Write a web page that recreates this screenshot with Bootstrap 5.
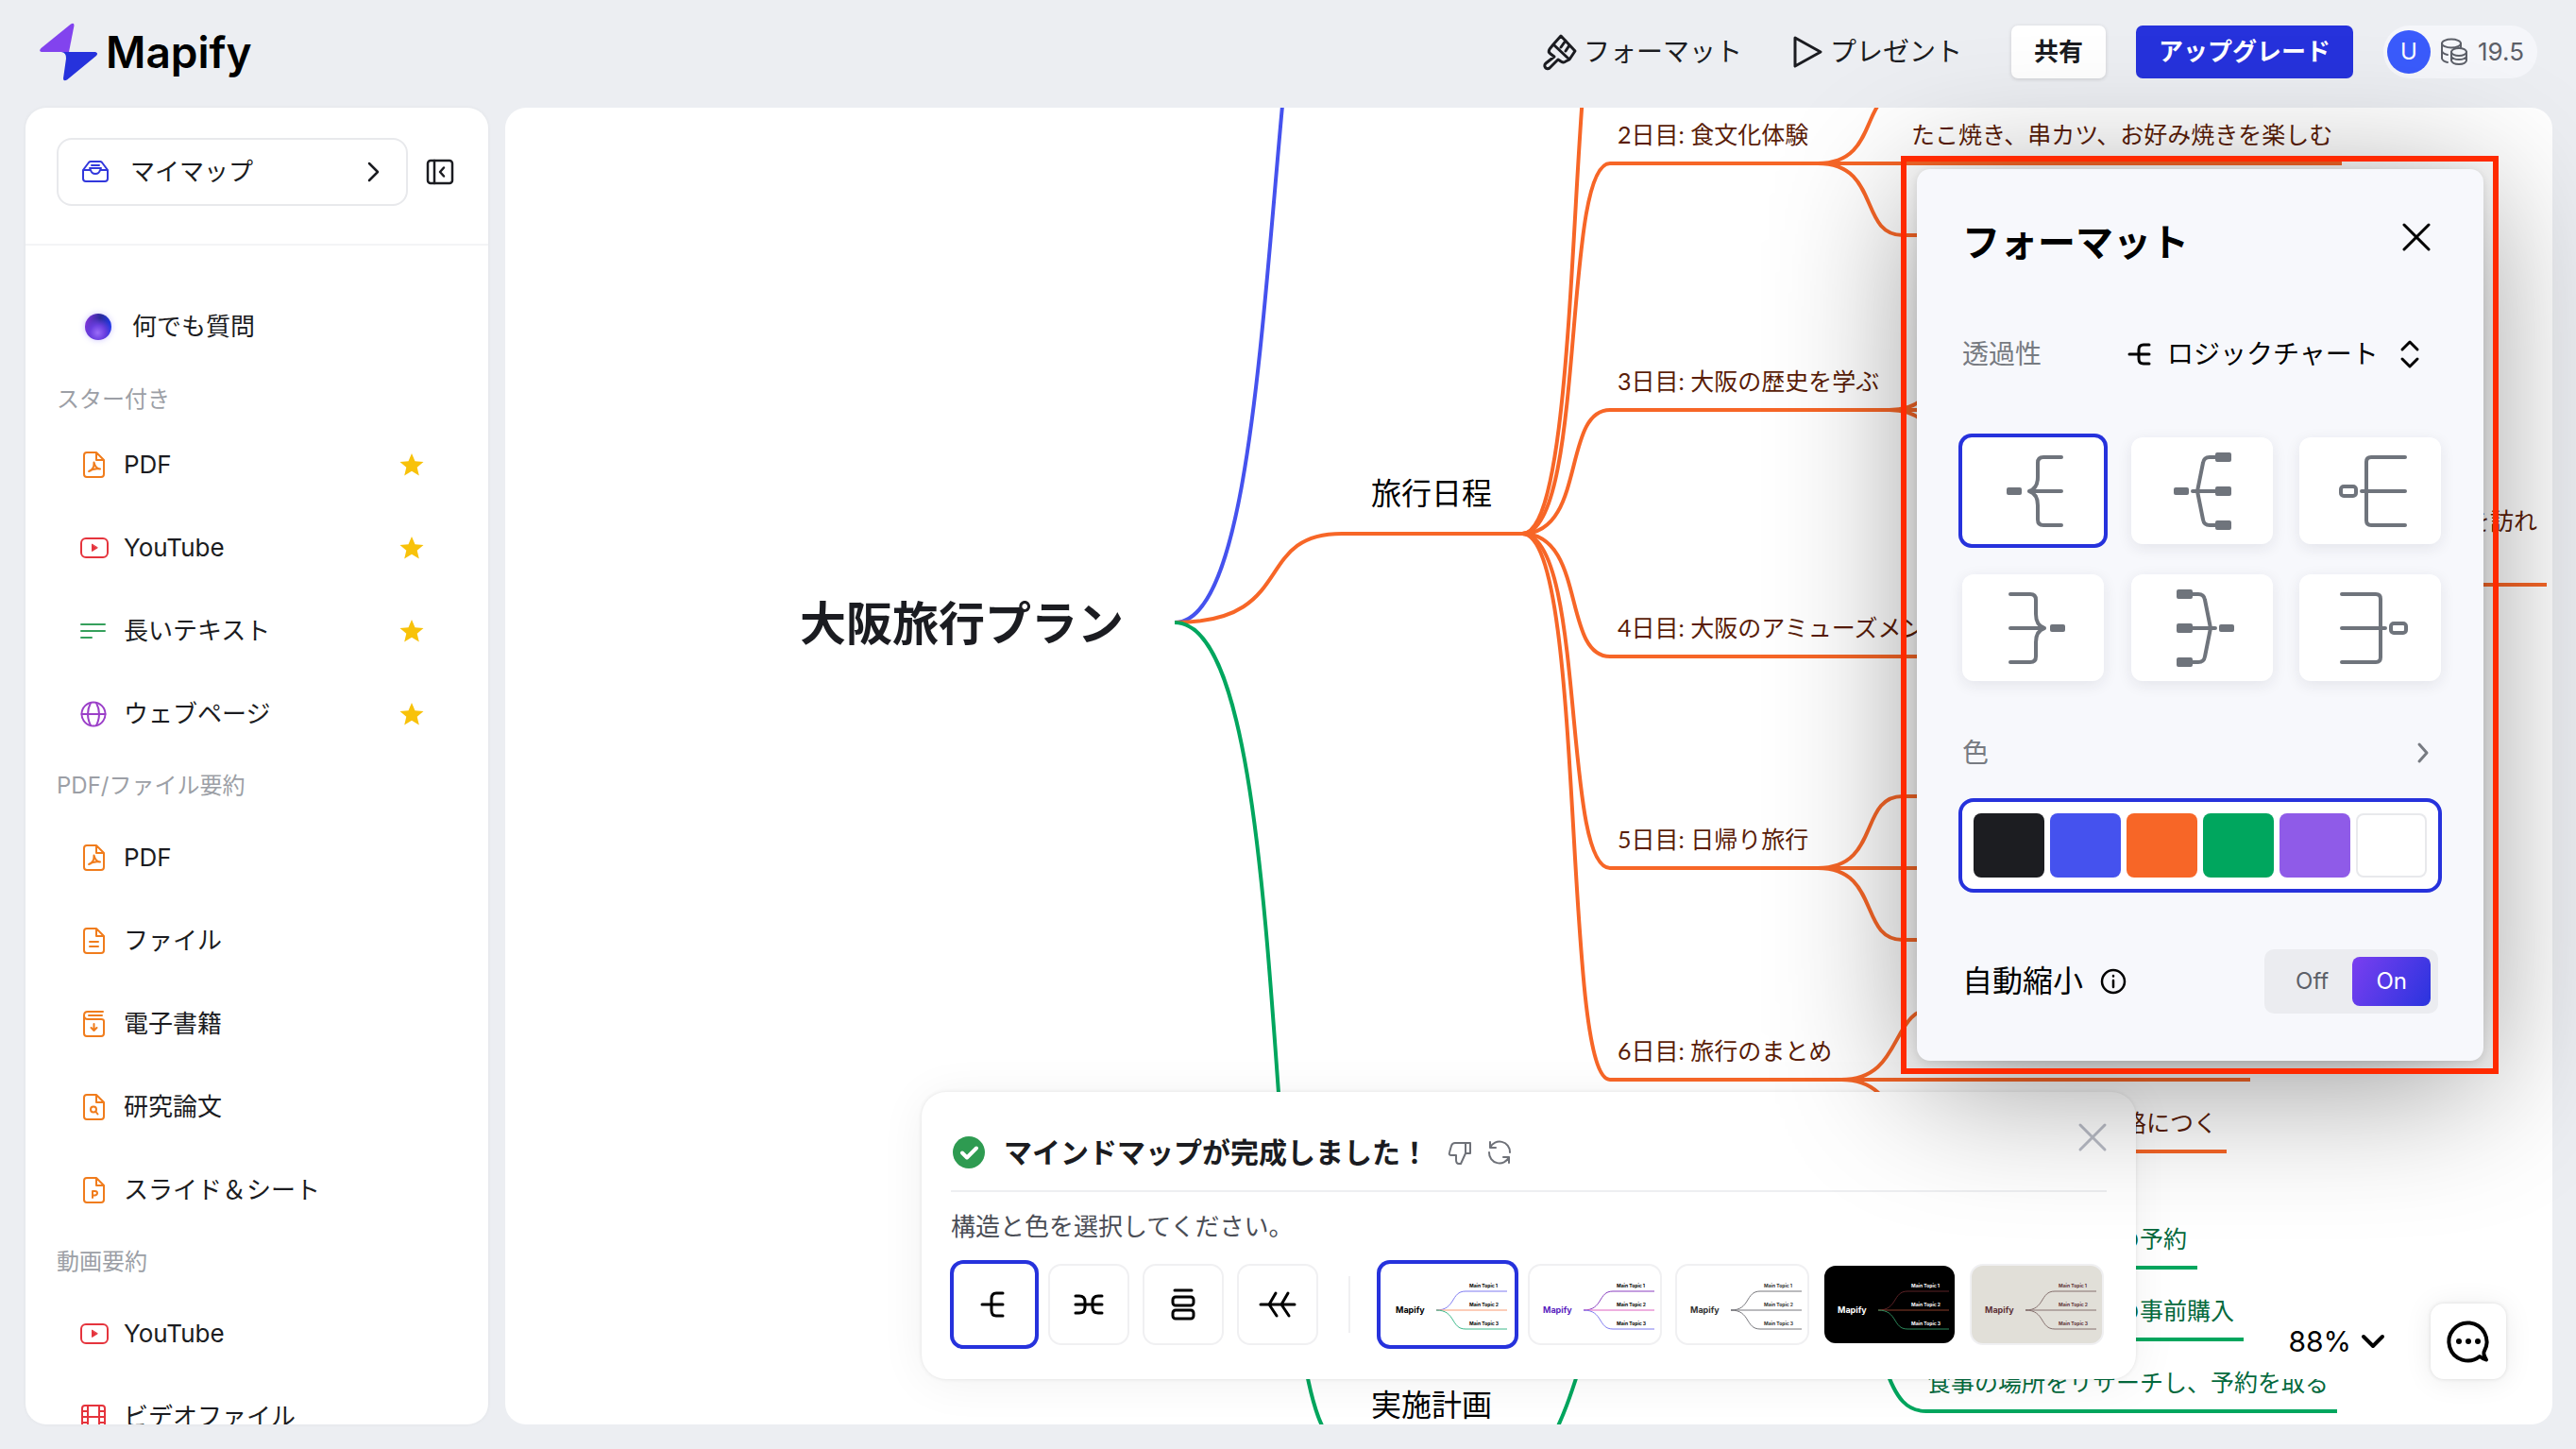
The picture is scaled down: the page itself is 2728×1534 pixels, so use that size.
<!DOCTYPE html>
<html lang="ja">
<head>
<meta charset="utf-8">
<meta name="viewport" content="width=device-width, initial-scale=1">
<title>Mapify</title>
<link href="https://cdn.jsdelivr.net/npm/bootstrap@5.3.0/dist/css/bootstrap.min.css" rel="stylesheet">
<style>
  :root { --brand: #2632dc; --ink: #1b1c21; --orange: #f76627; --green: #00a65e; }
  body { font-family: Inter, "Noto Sans CJK JP", sans-serif; background: #eceef2; color: var(--ink); font-size: 26px; line-height: 40px; }
  button, select { font-family: inherit; color: inherit; }
  svg { display: block; flex: none; overflow: visible; }
  .ico { fill: none; stroke: currentColor; stroke-width: 2; stroke-linecap: round; stroke-linejoin: round; }
  .plain { background: none; border: 0; padding: 0; }

  .topbar { height: 114px; padding: 0 41px 4px 42px; }
  .brand-name { font-size: 46px; font-weight: 600; color: #000; line-height: 56px; }
  .tool { font-size: 28px; gap: 7px; margin-right: 52px; }
  .btn-top { height: 56px; font-size: 26px; font-weight: 700; line-height: 40px; border-radius: 7px; padding: 0 24px; border: 0; }
  .btn-share { background: #fff; box-shadow: 0 1px 4px rgba(0,0,0,.14); margin-right: 32px; }
  .btn-up { background: var(--brand); color: #fff; margin-right: 32px; }
  .credit { height: 56px; border-radius: 28px; background: #f5f6fa; padding: 0 14px 0 4px; gap: 10px; color: #5c5f68; }
  .avatar { width: 46px; height: 46px; border-radius: 50%; background: #3a5bfc; color: #fff; font-size: 24px; }

  .workspace { padding: 0 25px 26px 27px; gap: 18px; min-height: 0; }
  .side { width: 490px; background: #fff; border-radius: 22px; box-shadow: 0 0 4px rgba(0,0,0,.05); }
  .side-head { padding: 32px 0 40px 33px; gap: 19px; border-bottom: 2px solid #f3f4f6; }
  .mymap { width: 372px; height: 72px; border: 2px solid #e8e9ec; border-radius: 16px; padding: 0 28px 0 24px; gap: 22px; }
  .side-row { height: 88px; padding: 0 68px 0 58px; color: var(--ink); text-decoration: none; }
  .side-row .pic { width: 28px; margin-right: 18px; }
  .side-ask { margin-top: 42px; padding-left: 63px; }
  .side-ask .pic { margin-right: 22px; }
  .side-label { font-size: 24px; height: 64px; padding-left: 33px; color: #9c9fa6; font-weight: 400; margin: 0; }
  .side-label.tight { height: 58px; padding-top: 8px; }
  .orb { width: 28px; height: 28px; border-radius: 50%; background: radial-gradient(circle at 48% 72%, #9a6cf8 0, #6b3fe0 32%, transparent 62%), linear-gradient(100deg, #7a34d6 10%, #2a2a9a 52%, #2238e8 90%); box-shadow: 0 0 6px rgba(110,90,250,.35); }

  .board { background: #fff; border-radius: 22px; }
  .board-map { border-radius: 22px; }
  .board-map svg { width: 100%; height: 100%; }
  .wire path { fill: none; stroke-width: 4; }
  .t1 { font-size: 49px; font-weight: 700; fill: #1b1c21; }
  .t2 { font-size: 32px; fill: #000; }
  .t3 { font-family: Lato, "Noto Sans CJK JP", sans-serif; font-size: 25px; fill: #5a1d08; }
  .t3.leafy { fill: #04693d; }

  .done { width: 1286px; bottom: 48px; background: #fff; border-radius: 26px; padding: 44px 31px 36px; box-shadow: 0 0 4px rgba(0,0,0,.1), 0 4px 50px rgba(0,0,0,.06); }
  .done h2 { font-size: 30px; line-height: 40px; font-weight: 700; margin: 0; }
  .done-head { padding: 0 2px 20px; border-bottom: 2px solid #eeeff1; gap: 20px; }
  .done-close { top: 32px; right: 30px; color: #b9bcc6; }
  .done-msg { color: #4b4e56; margin: 17px 0 19px; line-height: 40px; }
  .choices { gap: 14px; padding-left: 3px; }
  .choice { height: 86px; width: 86px; border: 2px solid #f0f0f2; border-radius: 14px; background: #fff; color: #000; overflow: hidden; }
  .choice.on { border: 0; box-shadow: 0 0 0 4px var(--brand); border-radius: 10px; }
  .choice.wide { width: 142px; }
  .choice.dark { background: #000; border-color: #fff; }
  .choice.sand { background: #e1dfd8; }
  .split { width: 2px; height: 60px; background: #f0f0f2; margin: 0 18px; }
  .mini { font-weight: 700; font-size: 9px; }
  .mini .s { font-size: 5px; }
  .mini path { fill: none; stroke-width: 1; }

  .corner { right: 49px; bottom: 48px; gap: 34px; color: #000; }
  .zoom { font-size: 30px; gap: 10px; background: #fff; height: 80px; padding: 0 14px; }
  .chat { width: 80px; height: 80px; border-radius: 14px; background: #fff; box-shadow: 0 0 4px rgba(0,0,0,.12), 0 2px 30px rgba(0,0,0,.08); }

  .format { top: 65px; right: 73px; width: 600px; background: #f7f8fc; border-radius: 14px; padding: 48px 45px 50px 48px; box-shadow: 0 2px 8px rgba(0,0,0,.1), 0 24px 150px rgba(0,0,0,.42); color: #000; z-index: 5; }
  .format h1 { font-size: 40px; line-height: 60px; font-weight: 700; margin: 0; }
  .format-head { padding-right: 10px; }
  .format-head .plain { margin-top: 8px; }
  .lbl { font-size: 28px; color: #777b82; }
  .kind { font-size: 28px; height: 48px; appearance: none; background: none; border: 0; width: 246px; padding: 0; color: #000; }
  .kind-end { margin-right: 22px; }
  .shapes { display: grid; grid-template-columns: repeat(3, 150px); justify-content: space-between; row-gap: 32px; }
  .shape { height: 113px; border: 0; background: #fff; border-radius: 12px; box-shadow: 0 4px 16px rgba(30,34,60,.09); color: #6f747c; }
  .shape.on { box-shadow: 0 0 0 4px var(--brand); border-radius: 10px; }
  .shape svg, .choice > svg.ico { margin: 0 auto; }
  .shape .ico { stroke-width: 4; }
  .swatches { margin: 4px -1px 0 -4px; border: 4px solid var(--brand); border-radius: 16px; padding: 12px; gap: 6px; background: #fff; }
  .swatch { height: 68px; border-radius: 8px; border: 0; }
  .auto-row { margin-top: 60px; }
  .auto { font-size: 32px; }
  .toggle { background: #ebecf0; border-radius: 10px; padding: 8px; width: 184px; font-size: 24px; margin-right: 3px; }
  .toggle button { height: 52px; border: 0; border-radius: 8px; background: none; color: #5c5f68; }
  .toggle .on { background: linear-gradient(120deg, #7a3ff0, #2a34de); color: #fff; }
  .frame { inset: -14px -16px -14px -17px; border: 6px solid #ff2a00; pointer-events: none; }
</style>
</head>
<body class="vh-100 overflow-hidden d-flex flex-column">

<header class="topbar d-flex align-items-center flex-shrink-0">
  <a href="#" class="d-flex align-items-center text-decoration-none gap-2">
    <svg width="62" height="62" viewBox="0 0 62 62"><path d="M33 1.500Q36.500-.5 36.500 3L31 31H2Q-1.500 30 1.500 27Z" fill="#8243ee"/><path d="M23 31H59Q62.500 32 60 35L29 60.500Q25 62.500 25 59L28 38Q28.500 32 23 31Z" fill="#2632dc"/></svg>
    <span class="brand-name">Mapify</span>
  </a>
  <nav class="d-flex align-items-center ms-auto">
    <button class="plain tool d-flex align-items-center">
      <svg class="ico" width="36" height="38" viewBox="0 0 36 38" style="stroke-width:3"><path d="M19 2 34 18 28 27 11 11ZM11 11 7 16Q5 19 8 21L12 24 3 31A3 3 0 0 0 7 36L16 27 19 29Q22 31 24 29L28 27M24 7 19 14M28 12 24 18"/></svg>
      フォーマット
    </button>
    <button class="plain tool d-flex align-items-center">
      <svg class="ico" width="34" height="36" viewBox="0 0 34 36" style="stroke-width:3"><path d="M4 3 31 18 4 33Z"/></svg>
      プレゼント
    </button>
    <button class="btn-top btn-share">共有</button>
    <button class="btn-top btn-up">アップグレード</button>
    <div class="credit d-flex align-items-center">
      <span class="avatar d-flex align-items-center justify-content-center">U</span>
      <svg class="ico" width="30" height="30" viewBox="0 0 30 30"><ellipse cx="12" cy="6" rx="10" ry="4.500"/><path d="M2 6V22Q3 25 8 26M2 14Q3 17 8 18M22 6V10"/><ellipse cx="20" cy="15" rx="8" ry="4"/><path d="M12 15V24Q13 28 20 28T28 24V15M12 20Q14 23 20 23T28 20"/></svg>
      <span>19.5</span>
    </div>
  </nav>
</header>

<main class="workspace d-flex flex-grow-1">
  <aside class="side flex-shrink-0 overflow-hidden">
    <div class="side-head d-flex align-items-center">
      <button class="mymap d-flex align-items-center bg-white">
        <svg class="ico" width="30" height="26" viewBox="0 0 30 26" style="color:#3238dc"><path d="M2 11 8 3Q9 2 10 2H20Q21 2 22 3L28 11V20Q28 23 25 23H5Q2 23 2 20ZM2 11H10Q11 15 15 15T20 11H28M11 6H19M9 9H21"/></svg>
        <span>マイマップ</span>
        <svg class="ico ms-auto" width="14" height="22" viewBox="0 0 14 22" style="stroke-width:2.500"><path d="M3 2 12 11 3 20"/></svg>
      </button>
      <button class="plain" aria-label="サイドバーを閉じる"><svg class="ico" width="30" height="28" viewBox="0 0 30 28" style="stroke-width:2.500"><rect x="2" y="2" width="26" height="24" rx="3"/><path d="M9 2V26M19 9.500 15 14 19 18.500"/></svg></button>
    </div>

    <a href="#" class="side-row side-ask d-flex align-items-center"><span class="pic orb"></span>何でも質問</a>

    <h2 class="side-label tight d-flex align-items-center">スター付き</h2>
    <a href="#" class="side-row d-flex align-items-center"><span class="pic"><svg class="ico" width="28" height="30" viewBox="0 0 28 30" style="color:#f07c1c"><path d="M17 2H7Q4 2 4 5V25Q4 28 7 28H22Q25 28 25 25V10ZM17 2V10H25M9 22Q15 20 14.500 12.500Q16 19 21 19.500Q14 18.500 9 22Z"/></svg></span>PDF<svg class="ms-auto" width="26" height="26" viewBox="0 0 26 26" fill="#f8c20a"><path d="M13 1 16.500 9.200 25.500 9.900 18.700 15.700 20.800 24.500 13 19.800 5.200 24.500 7.300 15.700.5 9.900 9.500 9.200Z"/></svg></a>
    <a href="#" class="side-row d-flex align-items-center"><span class="pic"><svg class="ico" width="30" height="24" viewBox="0 0 30 24" style="color:#e5343d"><rect x="1" y="2" width="28" height="20" rx="5"/><path d="M12.500 8.500V15.500L18 12Z" fill="currentColor" stroke-width="1"/></svg></span>YouTube<svg class="ms-auto" width="26" height="26" viewBox="0 0 26 26" fill="#f8c20a"><path d="M13 1 16.500 9.200 25.500 9.900 18.700 15.700 20.800 24.500 13 19.800 5.200 24.500 7.300 15.700.5 9.900 9.500 9.200Z"/></svg></a>
    <a href="#" class="side-row d-flex align-items-center"><span class="pic"><svg class="ico" width="28" height="20" viewBox="0 0 28 20" style="color:#36a05c"><path d="M1 3H26M1 10H26M1 17H12"/></svg></span>長いテキスト<svg class="ms-auto" width="26" height="26" viewBox="0 0 26 26" fill="#f8c20a"><path d="M13 1 16.500 9.200 25.500 9.900 18.700 15.700 20.800 24.500 13 19.800 5.200 24.500 7.300 15.700.5 9.900 9.500 9.200Z"/></svg></a>
    <a href="#" class="side-row d-flex align-items-center"><span class="pic"><svg class="ico" width="28" height="28" viewBox="0 0 28 28" style="color:#9b3fc8"><circle cx="14" cy="14" r="12.500"/><path d="M1.500 14H26.500M11 2Q5 14 11 26M17 2Q23 14 17 26"/></svg></span>ウェブページ<svg class="ms-auto" width="26" height="26" viewBox="0 0 26 26" fill="#f8c20a"><path d="M13 1 16.500 9.200 25.500 9.900 18.700 15.700 20.800 24.500 13 19.800 5.200 24.500 7.300 15.700.5 9.900 9.500 9.200Z"/></svg></a>

    <h2 class="side-label d-flex align-items-center">PDF/ファイル要約</h2>
    <a href="#" class="side-row d-flex align-items-center"><span class="pic"><svg class="ico" width="28" height="30" viewBox="0 0 28 30" style="color:#f07c1c"><path d="M17 2H7Q4 2 4 5V25Q4 28 7 28H22Q25 28 25 25V10ZM17 2V10H25M9 22Q15 20 14.500 12.500Q16 19 21 19.500Q14 18.500 9 22Z"/></svg></span>PDF</a>
    <a href="#" class="side-row d-flex align-items-center"><span class="pic"><svg class="ico" width="28" height="30" viewBox="0 0 28 30" style="color:#f07c1c"><path d="M17 2H7Q4 2 4 5V25Q4 28 7 28H22Q25 28 25 25V10ZM17 2V10H25M10 16H19M10 21H19"/></svg></span>ファイル</a>
    <a href="#" class="side-row d-flex align-items-center"><span class="pic"><svg class="ico" width="28" height="30" viewBox="0 0 28 30" style="color:#f07c1c"><path d="M24 2H8Q4 2 4 6V25Q4 28 7 28H22Q25 28 25 25V12Q25 10 22 10H8Q4 10 4 6M9 6H23M14.500 15V22M11.500 19 14.500 22 17.500 19"/></svg></span>電子書籍</a>
    <a href="#" class="side-row d-flex align-items-center"><span class="pic"><svg class="ico" width="28" height="30" viewBox="0 0 28 30" style="color:#f07c1c"><path d="M17 2H7Q4 2 4 5V25Q4 28 7 28H22Q25 28 25 25V10ZM17 2V10H25"/><circle cx="14" cy="17.500" r="3"/><path d="M16.500 20 18.500 22.500"/></svg></span>研究論文</a>
    <a href="#" class="side-row d-flex align-items-center"><span class="pic"><svg class="ico" width="28" height="30" viewBox="0 0 28 30" style="color:#f07c1c"><path d="M17 2H7Q4 2 4 5V25Q4 28 7 28H22Q25 28 25 25V10ZM17 2V10H25M13 23V16H15.500Q18 16 18 18T15.500 20.500H13"/></svg></span>スライド＆シート</a>

    <h2 class="side-label d-flex align-items-center">動画要約</h2>
    <a href="#" class="side-row d-flex align-items-center"><span class="pic"><svg class="ico" width="30" height="24" viewBox="0 0 30 24" style="color:#e5343d"><rect x="1" y="2" width="28" height="20" rx="5"/><path d="M12.500 8.500V15.500L18 12Z" fill="currentColor" stroke-width="1"/></svg></span>YouTube</a>
    <a href="#" class="side-row d-flex align-items-center"><span class="pic"><svg class="ico" width="28" height="28" viewBox="0 0 28 28" style="color:#e5343d"><rect x="2" y="2" width="24" height="24" rx="3"/><path d="M8 2V26M20 2V26M8 14H20M2 8H8M2 14H8M2 20H8M20 8H26M20 14H26M20 20H26"/></svg></span>ビデオファイル</a>
  </aside>

  <section class="board position-relative flex-grow-1">
    <div class="board-map overflow-hidden position-absolute top-0 start-0 w-100 h-100">
      <svg viewBox="535 114 2168 1394" preserveAspectRatio="xMidYMid slice">
        <g class="wire">
          <path stroke="#4552ee" d="M1244 659C1320 659 1335 361 1358 112"/>
          <g stroke="#f76627">
            <path d="M1244 659C1375 659 1325 565 1421 565H1614"/>
            <path d="M1612 565C1680 565 1658 -47 1705 -47"/>
            <path d="M1612 565C1680 565 1654 173 1705 173H2480"/>
            <path d="M1612 565C1680 565 1654 434 1705 434H2200"/>
            <path d="M1612 565C1680 565 1654 695 1705 695H2200"/>
            <path d="M1612 565C1680 565 1654 919 1705 919H2200"/>
            <path d="M1612 565C1680 565 1654 1143 1705 1143H2383"/>
            <path d="M1925 173C1992 173 1968 97 2015 97"/>
            <path d="M1925 173C1992 173 1968 249 2015 249H2100"/>
            <path d="M2001 434C2068 434 2044 358 2091 358"/>
            <path d="M2001 434C2068 434 2044 510 2091 510"/>
            <path d="M1925 919C1992 919 1968 843 2015 843H2100"/>
            <path d="M1925 919C1992 919 1968 995 2015 995H2100"/>
            <path d="M1950 1143C2017 1143 2000 1067 2050 1067"/>
            <path d="M1950 1143C2017 1143 2000 1219 2050 1219H2358"/>
            <path d="M2500 619H2697"/>
          </g>
          <g stroke="#00a65e">
            <path d="M1244 659C1380 659 1330 1530 1422 1530"/>
            <path d="M1640 1530C1656 1500 1664 1475 1672 1450"/>
            <path d="M1996 1446C2008 1482 2020 1494 2040 1494H2475"/>
            <path d="M2100 1342H2327"/>
            <path d="M2100 1418H2376"/>
          </g>
        </g>
        <text class="t1" x="847" y="678">大阪旅行プラン</text>
        <text class="t2" x="1452" y="534">旅行日程</text>
        <text class="t2" x="1452" y="1499">実施計画</text>
        <g class="t3">
          <text x="1713" y="152">2日目: 食文化体験</text>
          <text x="1713" y="413">3日目: 大阪の歴史を学ぶ</text>
          <text x="1713" y="674">4日目: 大阪のアミューズメント</text>
          <text x="1713" y="898">5日目: 日帰り旅行</text>
          <text x="1713" y="1122">6日目: 旅行のまとめ</text>
          <text x="2024" y="152">たこ焼き、串カツ、お好み焼きを楽しむ</text>
          <text x="2687" y="561" text-anchor="end">を訪れ</text>
          <text x="2348" y="1198" text-anchor="end">帰路につく</text>
        </g>
        <g class="t3 leafy">
          <text x="2316" y="1321" text-anchor="end">の予約</text>
          <text x="2366" y="1397" text-anchor="end">の事前購入</text>
          <text x="2466" y="1473" text-anchor="end">食事の場所をリサーチし、予約を取る</text>
        </g>
      </svg>
    </div>

    <div class="done position-absolute start-50 translate-middle-x">
      <div class="done-head d-flex align-items-center">
        <svg width="34" height="34" viewBox="0 0 34 34"><circle cx="17" cy="17" r="17" fill="#2e9b51"/><path d="M10 17.500 15 22.500 25 12.500" fill="none" stroke="#fff" stroke-width="4" stroke-linecap="round" stroke-linejoin="round"/></svg>
        <h2>マインドマップが完成しました！</h2>
        <div class="d-flex gap-3" style="color:#6e7178">
          <button class="plain" aria-label="よくない"><svg class="ico" width="26" height="26" viewBox="0 0 26 26"><path d="M19 3H8Q5 3 4 6L2 13Q1 16 4 16H9V21Q9 25 12 25H14L19 14ZM19 3H24V14H19"/></svg></button>
          <button class="plain" aria-label="再生成"><svg class="ico" width="26" height="26" viewBox="0 0 26 26"><path d="M3 8A11 11 0 0 1 24 13M3 2V8H9M23 18A11 11 0 0 1 2 13M23 24V18H17"/></svg></button>
        </div>
      </div>
      <button class="plain done-close position-absolute" aria-label="閉じる"><svg class="ico" width="32" height="32" viewBox="0 0 32 32" style="stroke-width:3"><path d="M3 3 29 29M29 3 3 29"/></svg></button>
      <p class="done-msg">構造と色を選択してください。</p>
      <div class="choices d-flex align-items-center">
        <button class="choice on p-0" aria-label="ロジックチャート"><svg class="ico" width="28" height="28" viewBox="2 0 28 28" style="stroke-width:3"><path d="M3 14H25M25 2H18Q13 2 13 8V20Q13 26 18 26H25"/></svg></button>
        <button class="choice p-0" aria-label="マインドマップ"><svg class="ico" width="32" height="24" viewBox="0 0 32 24" style="stroke-width:3"><path d="M2 12H30M2 3H6Q12 3 12 9V15Q12 21 6 21H2M30 3H26Q20 3 20 9V15Q20 21 26 21H30"/></svg></button>
        <button class="choice p-0" aria-label="グリッド"><svg class="ico" width="28" height="34" viewBox="0 0 28 34" style="stroke-width:3"><path d="M5 2H23"/><rect x="3" y="9" width="22" height="9" rx="3"/><rect x="3" y="23" width="22" height="9" rx="3"/></svg></button>
        <button class="choice p-0" aria-label="タイムライン"><svg class="ico" width="40" height="28" viewBox="0 0 40 28" style="stroke-width:3"><path d="M2 14H38M18 2 11 14 19 26M31 2 24 14 32 26"/></svg></button>
        <span class="split"></span>
        <button class="choice wide on p-0"><svg class="mini" width="142" height="86" viewBox="0 0 142 86"><path stroke="#7f7bf0" d="M59 49C80 49 74 29 90 29H134"/><path stroke="#f99a72" d="M59 49H134"/><path stroke="#3cb98a" d="M59 49C80 49 74 69 90 69H134"/><text x="16" y="52">Mapify</text><g class="s"><text x="94" y="25">Main Topic 1</text><text x="94" y="45">Main Topic 2</text><text x="94" y="65">Main Topic 3</text></g></svg></button>
        <button class="choice wide p-0"><svg class="mini" width="138" height="82" viewBox="2 2 138 82"><path stroke="#8a3fc0" d="M59 49C80 49 74 29 90 29H134"/><path stroke="#e060c0" d="M59 49H134"/><path stroke="#7f7bf0" d="M59 49C80 49 74 69 90 69H134"/><text x="16" y="52" fill="#5b1fc0">Mapify</text><g class="s"><text x="94" y="25">Main Topic 1</text><text x="94" y="45">Main Topic 2</text><text x="94" y="65">Main Topic 3</text></g></svg></button>
        <button class="choice wide p-0"><svg class="mini" width="138" height="82" viewBox="2 2 138 82" stroke="#77777c" fill="#333"><path d="M59 49C80 49 74 29 90 29H134M59 49H134M59 49C80 49 74 69 90 69H134"/><g stroke="none"><text x="16" y="52">Mapify</text><g class="s"><text x="94" y="25">Main Topic 1</text><text x="94" y="45">Main Topic 2</text><text x="94" y="65">Main Topic 3</text></g></g></svg></button>
        <button class="choice wide dark p-0"><svg class="mini" width="138" height="82" viewBox="2 2 138 82" fill="#fff"><path stroke="#5c2226" d="M59 49C80 49 74 29 90 29H134"/><path stroke="#8a3f2a" d="M59 49H134"/><path stroke="#2c8a5c" d="M59 49C80 49 74 69 90 69H134"/><text x="16" y="52">Mapify</text><g class="s"><text x="94" y="25">Main Topic 1</text><text x="94" y="45">Main Topic 2</text><text x="94" y="65">Main Topic 3</text></g></svg></button>
        <button class="choice wide sand p-0"><svg class="mini" width="138" height="82" viewBox="2 2 138 82" stroke="#86716f" fill="#5e3338"><path d="M59 49C80 49 74 29 90 29H134M59 49H134M59 49C80 49 74 69 90 69H134"/><g stroke="none"><text x="16" y="52">Mapify</text><g class="s"><text x="94" y="25">Main Topic 1</text><text x="94" y="45">Main Topic 2</text><text x="94" y="65">Main Topic 3</text></g></g></svg></button>
      </div>
    </div>

    <div class="corner position-absolute d-flex align-items-center">
      <button class="zoom border-0 d-flex align-items-center">88%<svg class="ico" width="26" height="16" viewBox="0 0 26 16" style="stroke-width:4"><path d="M3 3 13 13 23 3"/></svg></button>
      <button class="chat border-0 d-flex align-items-center justify-content-center p-0" aria-label="チャット"><svg width="44" height="44" viewBox="0 0 44 44"><path d="M34 38A20 20 0 1 1 39 32Q37 35 41 41.500Q38 41 34 38Z" fill="none" stroke="#000" stroke-width="4" stroke-linejoin="round"/><circle cx="12" cy="22" r="3"/><circle cx="22" cy="22" r="3"/><circle cx="32" cy="22" r="3"/></svg></button>
    </div>

    <div class="format position-absolute">
      <div class="format-head d-flex align-items-start justify-content-between">
        <h1>フォーマット</h1>
        <button class="plain" aria-label="閉じる"><svg class="ico" width="32" height="32" viewBox="0 0 32 32" style="stroke-width:3"><path d="M3 3 29 29M29 3 3 29"/></svg></button>
      </div>
      <div class="d-flex align-items-center pt-5 mt-3">
        <label class="lbl" for="kind">透過性</label>
        <svg class="ico ms-auto" width="26" height="24" viewBox="0 0 26 24" style="stroke-width:3"><path d="M2 12H23M23 2H17Q12 2 12 7V17Q12 22 17 22H23"/></svg>
        <select class="kind ms-3" id="kind"><option>ロジックチャート</option></select>
        <svg class="ico kind-end" width="22" height="30" viewBox="0 0 22 30" style="stroke-width:3"><path d="M3 10 11 2 19 10M3 20 11 28 19 20"/></svg>
      </div>
      <div class="shapes pt-5 mt-3">
        <button class="shape on p-0" aria-label="形 1"><svg class="ico" width="64" height="80" viewBox="-2 0 64 80"><path d="M28 40H60M26 40Q35 37 35 25V10Q35 4 41 4H60M26 40Q35 43 35 55V70Q35 76 41 76H60"/><rect x="4" y="38" width="12" height="4"/></svg></button>
        <button class="shape p-0" aria-label="形 2"><svg class="ico" width="64" height="80" viewBox="0 0 64 80"><path d="M22 40H48M27 40 33 10Q34 4 40 4H48M27 40 33 70Q34 76 40 76H48"/><rect x="4" y="38" width="12" height="4"/><g fill="currentColor"><rect x="48" y="1" width="13" height="6"/><rect x="48" y="37" width="13" height="6"/><rect x="48" y="73" width="13" height="6"/></g></svg></button>
        <button class="shape p-0" aria-label="形 3"><svg class="ico" width="76" height="80" viewBox="-3 0 76 80"><path d="M26 40H72M72 4H36Q31 4 31 9V71Q31 76 36 76H72"/><rect x="4" y="35" width="16" height="10" rx="3"/></svg></button>
        <button class="shape p-0" aria-label="形 4"><svg class="ico" width="64" height="80" viewBox="-4 0 64 80"><path d="M36 40H4M40 40Q31 37 31 25V10Q31 4 25 4H4M40 40Q31 43 31 55V70Q31 76 25 76H4"/><rect x="48" y="38" width="12" height="4"/></svg></button>
        <button class="shape p-0" aria-label="形 5"><svg class="ico" width="64" height="80" viewBox="-4 0 64 80"><path d="M42 40H16M37 40 31 10Q30 4 24 4H16M37 40 31 70Q30 76 24 76H16"/><rect x="48" y="38" width="12" height="4"/><g fill="currentColor"><rect x="3" y="1" width="13" height="6"/><rect x="3" y="37" width="13" height="6"/><rect x="3" y="73" width="13" height="6"/></g></svg></button>
        <button class="shape p-0" aria-label="形 6"><svg class="ico" width="76" height="80" viewBox="-4 0 76 80"><path d="M50 40H4M4 4H40Q45 4 45 9V71Q45 76 40 76H4"/><rect x="56" y="35" width="16" height="10" rx="3"/></svg></button>
      </div>
      <button class="plain lbl w-100 d-flex align-items-center justify-content-between pt-5 pb-4 pe-2 mt-2">色
        <svg class="ico me-1" width="14" height="22" viewBox="0 0 14 22" style="stroke-width:3"><path d="M3 2 11 11 3 20"/></svg>
      </button>
      <div class="swatches d-flex">
        <button class="swatch flex-fill" style="background:#1c1d21" aria-label="黒"></button>
        <button class="swatch flex-fill" style="background:#4552ee" aria-label="青"></button>
        <button class="swatch flex-fill" style="background:#f76627" aria-label="橙"></button>
        <button class="swatch flex-fill" style="background:#00a65e" aria-label="緑"></button>
        <button class="swatch flex-fill" style="background:#8f5be8" aria-label="紫"></button>
        <button class="swatch flex-fill" style="background:#fff;box-shadow:inset 0 0 0 2px #e8e9ec" aria-label="白"></button>
      </div>
      <div class="auto-row d-flex align-items-center">
        <span class="auto me-3">自動縮小</span>
        <svg class="ico" width="28" height="28" viewBox="-2 0 28 28" style="stroke-width:2.500"><circle cx="14" cy="14" r="12"/><path d="M14 13V20M14 8V8.500"/></svg>
        <div class="toggle d-flex ms-auto">
          <button class="flex-fill p-0">Off</button>
          <button class="flex-fill p-0 on">On</button>
        </div>
      </div>
      <div class="frame position-absolute"></div>
    </div>
  </section>
</main>
<script src="https://cdn.jsdelivr.net/npm/bootstrap@5.3.0/dist/js/bootstrap.bundle.min.js"></script>
</body>
</html>
